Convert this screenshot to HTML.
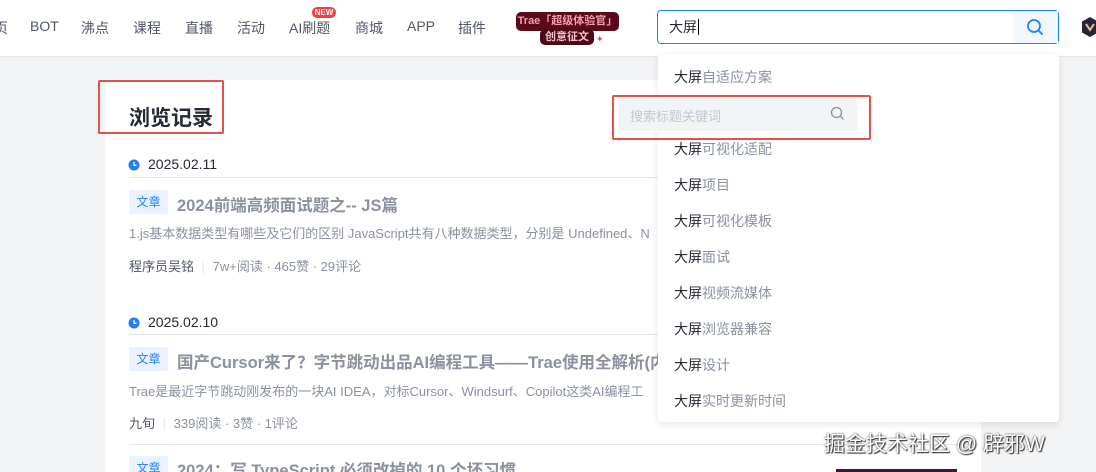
<!DOCTYPE html>
<html><head><meta charset="utf-8"><style>
*{margin:0;padding:0;box-sizing:border-box}
html,body{width:1096px;height:472px;overflow:hidden}
body{background:#f2f3f5;font-family:"Liberation Sans","Noto Sans CJK SC",sans-serif;position:relative;color:#252933}
.abs{position:absolute}
.hdr{left:0;top:0;width:1096px;height:57px;background:#fff;border-bottom:1px solid #e4e6eb}
.nav{top:18px;font-size:14px;color:#515767;white-space:nowrap}
.card{left:105px;top:80px;width:876px;height:392px;background:#fff}
.date{font-size:14px;color:#252933}
.line{height:1px;background:#e4e6eb}
.tag{width:39px;height:24px;background:#eaf2ff;color:#1e80ff;font-size:12px;text-align:center;line-height:24px;border-radius:2px}
.title{font-size:16.5px;font-weight:bold;color:#8a919f;white-space:nowrap}
.desc{font-size:13px;color:#8a919f;white-space:nowrap}
.meta{font-size:13px;color:#515767;white-space:nowrap}
.meta span{color:#8a919f}
.dd{left:658px;top:54px;width:401px;height:368px;background:#fff;border-radius:4px;box-shadow:0 2px 8px rgba(0,0,0,.1)}
.it{left:674px;font-size:14px;color:#8a919f;white-space:nowrap}
.it b{font-weight:normal;color:#252933}
</style></head><body>
<div class="abs hdr"></div>
<div class="abs nav" style="left:-6px">页</div>
<div class="abs nav" style="left:30px">BOT</div>
<div class="abs nav" style="left:81px">沸点</div>
<div class="abs nav" style="left:133px">课程</div>
<div class="abs nav" style="left:185px">直播</div>
<div class="abs nav" style="left:237px">活动</div>
<div class="abs nav" style="left:289px">AI刷题</div>
<div class="abs" style="left:312px;top:7px;width:24px;height:11px;background:#f53f3f;border-radius:6px;color:#fff;font-size:8px;font-weight:bold;text-align:center;line-height:11px">NEW</div>
<div class="abs nav" style="left:355px">商城</div>
<div class="abs nav" style="left:407px">APP</div>
<div class="abs nav" style="left:458px">插件</div>
<div class="abs" style="left:516px;top:12px;width:103px;height:19px;background:#5c0a1a;border-radius:5px;color:#f2a0b0;font-size:11px;font-weight:bold;text-align:center;line-height:19px">Trae「超级体验官」</div>
<div class="abs" style="left:540px;top:29px;width:54px;height:16px;background:#4a0a18;border-radius:5px;color:#f2c0cc;font-size:11px;font-weight:bold;text-align:center;line-height:16px">创意征文</div>
<div class="abs" style="left:596px;top:34px;color:#f04060;font-size:9px">✦</div>
<div class="abs" style="left:657px;top:10px;width:402px;height:34px;border:1px solid #1e80ff;border-radius:4px;background:#fff"></div>
<div class="abs" style="left:1013px;top:11px;width:45px;height:32px;background:#f2f6fd"></div>
<svg class="abs" style="left:1026px;top:18px" width="18" height="18" viewBox="0 0 18 18"><circle cx="8" cy="8" r="6" fill="none" stroke="#1e80ff" stroke-width="1.8"/><path d="M12.5 12.5L16 16" stroke="#1e80ff" stroke-width="1.8" stroke-linecap="round"/></svg>
<div class="abs" style="left:669px;top:17px;font-size:14px;color:#252933">大屏<span style="border-left:1px solid #000;margin-left:1px"></span></div>
<svg class="abs" style="left:1082px;top:17px" width="16" height="20" viewBox="0 0 16 20"><path d="M8 0L16 4.5V15.5L8 20L0 15.5V4.5Z" fill="#2a2438"/><path d="M4 7L8 13L12 7" fill="none" stroke="#e8c888" stroke-width="2"/></svg>

<div class="abs card"></div>
<div class="abs" style="left:129px;top:102px;font-size:21px;font-weight:bold;color:#252933">浏览记录</div>
<div class="abs" style="left:98px;top:80px;width:126px;height:54px;border:2px solid #e0524a;border-radius:2px"></div>

<svg class="abs" style="left:128px;top:159px" width="12" height="12" viewBox="0 0 12 12"><circle cx="6" cy="6" r="5.5" fill="#1e80ff"/><path d="M6 3V6.3H8.5" fill="none" stroke="#fff" stroke-width="1.3"/></svg>
<div class="abs date" style="left:148px;top:156px">2025.02.11</div>
<div class="abs line" style="left:129px;top:177px;width:530px"></div>
<div class="abs tag" style="left:129px;top:190px">文章</div>
<div class="abs title" style="left:177px;top:192px">2024前端高频面试题之-- JS篇</div>
<div class="abs desc" style="left:129px;top:223px">1.js基本数据类型有哪些及它们的区别 JavaScript共有八种数据类型，分别是 Undefined、N</div>
<div class="abs meta" style="left:129px;top:256px">程序员吴铭 <span style="color:#e4e6eb;margin:0 4px">|</span> <span>7w+阅读 · 465赞 · 29评论</span></div>

<svg class="abs" style="left:128px;top:317px" width="12" height="12" viewBox="0 0 12 12"><circle cx="6" cy="6" r="5.5" fill="#1e80ff"/><path d="M6 3V6.3H8.5" fill="none" stroke="#fff" stroke-width="1.3"/></svg>
<div class="abs date" style="left:148px;top:314px">2025.02.10</div>
<div class="abs line" style="left:129px;top:334px;width:530px"></div>
<div class="abs tag" style="left:129px;top:347px">文章</div>
<div class="abs title" style="left:177px;top:349px">国产Cursor来了？字节跳动出品AI编程工具——Trae使用全解析(内</div>
<div class="abs desc" style="left:129px;top:381px">Trae是最近字节跳动刚发布的一块AI IDEA，对标Cursor、Windsurf、Copilot这类AI编程工</div>
<div class="abs meta" style="left:129px;top:413px">九旬 <span style="color:#e4e6eb;margin:0 4px">|</span> <span>339阅读 · 3赞 · 1评论</span></div>
<div class="abs line" style="left:129px;top:444px;width:850px"></div>
<div class="abs tag" style="left:129px;top:456px">文章</div>
<div class="abs title" style="left:177px;top:457px">2024：写 TypeScript 必须改掉的 10 个坏习惯</div>
<div class="abs" style="left:836px;top:469px;width:121px;height:3px;background:#3a1838"></div>

<div class="abs dd"></div>
<div class="abs it" style="top:67px"><b>大屏</b>自适应方案</div>
<div class="abs it" style="top:139px"><b>大屏</b>可视化适配</div>
<div class="abs it" style="top:175px"><b>大屏</b>项目</div>
<div class="abs it" style="top:211px"><b>大屏</b>可视化模板</div>
<div class="abs it" style="top:247px"><b>大屏</b>面试</div>
<div class="abs it" style="top:283px"><b>大屏</b>视频流媒体</div>
<div class="abs it" style="top:319px"><b>大屏</b>浏览器兼容</div>
<div class="abs it" style="top:355px"><b>大屏</b>设计</div>
<div class="abs it" style="top:391px"><b>大屏</b>实时更新时间</div>

<div class="abs" style="left:619px;top:98px;width:238px;height:33px;background:#f2f3f5;border-radius:2px"></div>
<div class="abs" style="left:630px;top:106px;font-size:13px;color:#c2c8d1">搜索标题关键词</div>
<svg class="abs" style="left:830px;top:106px" width="15" height="15" viewBox="0 0 15 15"><circle cx="6.5" cy="6.5" r="5" fill="none" stroke="#8a919f" stroke-width="1.3"/><path d="M10.2 10.2L13 13" stroke="#8a919f" stroke-width="1.3" stroke-linecap="round"/></svg>
<div class="abs" style="left:612px;top:95px;width:259px;height:45px;border:2px solid #e0524a;border-radius:2px"></div>

<div class="abs" style="left:824px;top:428px;font-size:21px;color:#fff;white-space:nowrap;text-shadow:0 0 2px #333,1px 1px 1px #333">掘金技术社区 @ 辟邪W</div>
</body></html>
